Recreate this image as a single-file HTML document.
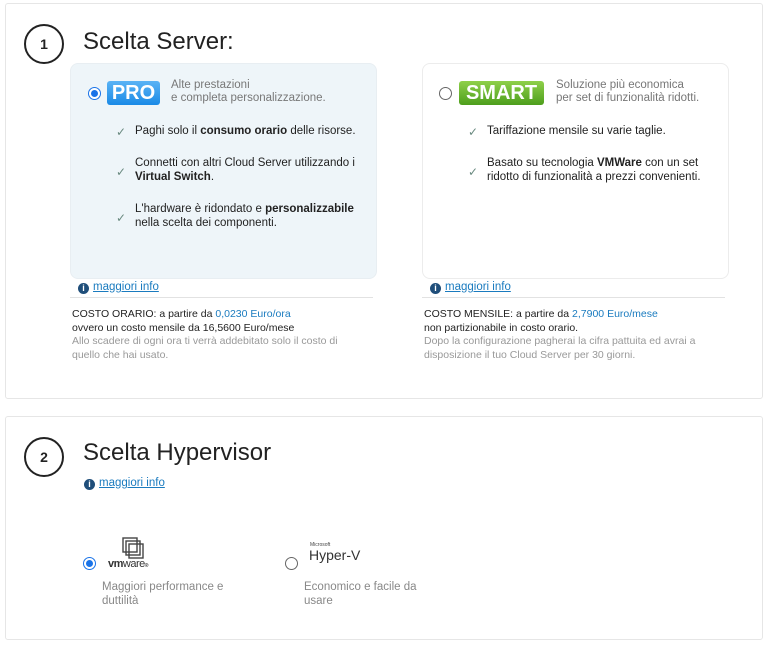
<!DOCTYPE html>
<html><head><meta charset="utf-8"><style>
*{box-sizing:border-box;margin:0;padding:0}
body{width:769px;height:647px;background:#fff;font-family:"Liberation Sans",sans-serif;color:#222;position:relative;overflow:hidden}
.abs{position:absolute}
.panel{position:absolute;border:1px solid #e6e6e6;border-radius:3px;background:#fff}
.circ{position:absolute;width:40px;height:40px;border:2px solid #222;border-radius:50%;text-align:center;line-height:36px;font-size:14px;font-weight:bold}
.title{position:absolute;font-size:24px;color:#222}
.card{position:absolute;border:1px solid #e8eef2;border-radius:8px}
.radio{position:absolute;width:13px;height:13px;border:1px solid #666;border-radius:50%;background:#fff}
.radio.on{border:1px solid #1a73e8}
.radio.on:after{content:"";position:absolute;left:2px;top:2px;width:7px;height:7px;border-radius:50%;background:#1a73e8}
.badge{position:absolute;color:#fff;font-weight:bold;font-size:20px;text-align:center;border-radius:3px;line-height:24px}
.desc{position:absolute;font-size:11.5px;color:#777;line-height:13px}
.item{position:absolute;font-size:11.5px;line-height:14px;color:#222}
.chk{position:absolute;color:#6a8a80;font-size:12px}
.info{position:absolute;font-size:11.5px;color:#1a7bbf;text-decoration:underline}
.info i{display:inline-block;width:11px;height:11px;border-radius:50%;background:#1f4e7a;color:#fff;font-style:normal;font-size:9px;font-weight:bold;text-align:center;line-height:11px;margin-right:4px;text-decoration:none;vertical-align:-1px}
.cost{position:absolute;font-size:10.5px;line-height:13.5px;color:#222}
.cost .b{color:#1a7bbf}
.cost .g{color:#999}
.hr{position:absolute;height:1px;background:#e2e2e2}
</style></head><body>
<div class="panel" style="left:5px;top:3px;width:758px;height:396px"></div>
<div class="circ" style="left:24px;top:24px">1</div>
<div class="title" style="left:83px;top:28px">Scelta Server:</div>

<div class="card" style="left:70px;top:63px;width:307px;height:216px;background:#eef5f9"></div>
<div class="radio on" style="left:88px;top:87px"></div>
<div class="badge" style="left:107px;top:81px;width:53px;background:linear-gradient(#5ab3f5,#1a8ae6)">PRO</div>
<div class="desc" style="left:171px;top:79px">Alte prestazioni<br>e completa personalizzazione.</div>
<div class="chk" style="left:116px;top:125px">✓</div>
<div class="item" style="left:135px;top:124px">Paghi solo il <b>consumo orario</b> delle risorse.</div>
<div class="chk" style="left:116px;top:165px">✓</div>
<div class="item" style="left:135px;top:156px">Connetti con altri Cloud Server utilizzando i<br><b>Virtual Switch</b>.</div>
<div class="chk" style="left:116px;top:211px">✓</div>
<div class="item" style="left:135px;top:202px">L'hardware è ridondato e <b>personalizzabile</b><br>nella scelta dei componenti.</div>
<div class="info" style="left:78px;top:281px"><i>i</i>maggiori info</div>
<div class="hr" style="left:70px;top:297px;width:303px"></div>
<div class="cost" style="left:72px;top:308px">COSTO ORARIO: a partire da <span class="b">0,0230 Euro/ora</span><br>ovvero un costo mensile da 16,5600 Euro/mese<br><span class="g">Allo scadere di ogni ora ti verrà addebitato solo il costo di<br>quello che hai usato.</span></div>

<div class="card" style="left:422px;top:63px;width:307px;height:216px;background:#fff;border-color:#ececec"></div>
<div class="radio" style="left:439px;top:87px"></div>
<div class="badge" style="left:459px;top:81px;width:85px;background:linear-gradient(#8fd04a,#4d9e1c)">SMART</div>
<div class="desc" style="left:556px;top:79px">Soluzione più economica<br>per set di funzionalità ridotti.</div>
<div class="chk" style="left:468px;top:125px">✓</div>
<div class="item" style="left:487px;top:124px">Tariffazione mensile su varie taglie.</div>
<div class="chk" style="left:468px;top:165px">✓</div>
<div class="item" style="left:487px;top:156px">Basato su tecnologia <b>VMWare</b> con un set<br>ridotto di funzionalità a prezzi convenienti.</div>
<div class="info" style="left:430px;top:281px"><i>i</i>maggiori info</div>
<div class="hr" style="left:422px;top:297px;width:303px"></div>
<div class="cost" style="left:424px;top:308px">COSTO MENSILE: a partire da <span class="b">2,7900 Euro/mese</span><br>non partizionabile in costo orario.<br><span class="g">Dopo la configurazione pagherai la cifra pattuita ed avrai a<br>disposizione il tuo Cloud Server per 30 giorni.</span></div>

<div class="panel" style="left:5px;top:416px;width:758px;height:224px"></div>
<div class="circ" style="left:24px;top:437px">2</div>
<div class="title" style="left:83px;top:439px">Scelta Hypervisor</div>
<div class="info" style="left:84px;top:477px"><i>i</i>maggiori info</div>

<div class="radio on" style="left:83px;top:557px"></div>
<svg class="abs" style="left:121px;top:537px" width="26" height="24" viewBox="0 0 26 24" fill="none" stroke="#444" stroke-width="1.4"><rect x="2" y="1" width="14" height="14"/><rect x="5" y="4" width="14" height="14"/><rect x="8" y="7" width="14" height="14"/></svg>
<div class="abs" style="left:108px;top:558px;font-size:11px;font-weight:bold;color:#333;letter-spacing:-0.5px">vm<span style="font-weight:normal">ware</span><span style="font-size:5px">®</span></div>
<div class="desc" style="left:102px;top:580px;color:#888;font-size:11.5px;line-height:14px">Maggiori performance e<br>duttilità</div>

<div class="radio" style="left:285px;top:557px"></div>
<div class="abs" style="left:310px;top:542px;font-size:5px;color:#444">Microsoft</div>
<div class="abs" style="left:309px;top:547px;font-size:14px;color:#333">Hyper-V</div>
<div class="desc" style="left:304px;top:580px;color:#888;font-size:11.5px;line-height:14px">Economico e facile da<br>usare</div>
</body></html>
